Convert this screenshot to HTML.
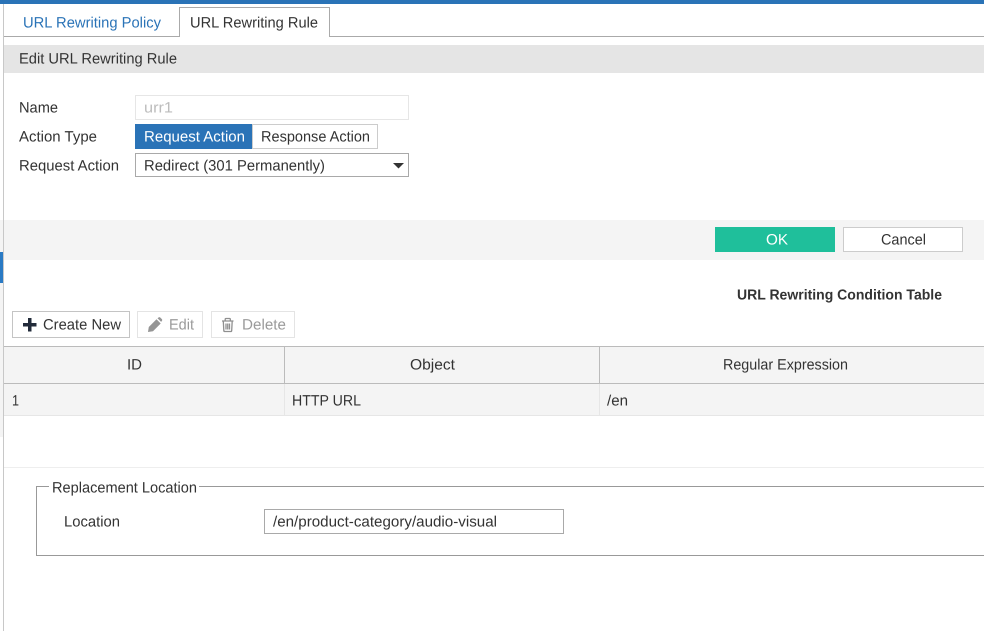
<!DOCTYPE html>
<html><head><meta charset="utf-8"><style>
html,body{margin:0;padding:0;background:#fff;width:984px;height:631px;overflow:hidden}
svg{display:block}
text{font-family:"Liberation Sans",sans-serif;font-size:15px;fill:#333;text-rendering:geometricPrecision;transform:translateY(-.5px)}
</style></head><body>
<svg xmlns="http://www.w3.org/2000/svg" width="984" height="631" viewBox="0 0 984 631" shape-rendering="crispEdges">
<rect width="984" height="631" fill="#fff"/>
<rect x="0" y="220" width="3" height="217" fill="#f4f4f4"/>
<rect x="0" y="0" width="984" height="4" fill="#2a73b7"/>
<rect x="3" y="4" width="1" height="627" fill="#c8c8c8"/>
<rect x="0" y="252" width="3" height="31" fill="#2a7ac4"/>
<!-- tabs -->
<rect x="4" y="36" width="980" height="1" fill="#aaa"/>
<rect x="179" y="7" width="151" height="30" fill="#aaa"/>
<rect x="180" y="8" width="149" height="29" fill="#fff"/>
<text x="23" y="28" textLength="138" lengthAdjust="spacingAndGlyphs" style="fill:#2a73b7">URL Rewriting Policy</text>
<text x="190" y="28" textLength="128" lengthAdjust="spacingAndGlyphs">URL Rewriting Rule</text>
<!-- section -->
<rect x="4" y="45" width="980" height="28" fill="#e5e5e5"/>
<text x="19" y="64" textLength="158" lengthAdjust="spacingAndGlyphs">Edit URL Rewriting Rule</text>
<!-- form -->
<text x="19" y="113" textLength="39" lengthAdjust="spacingAndGlyphs">Name</text>
<rect x="135.500" y="95.500" width="273" height="24" fill="#fff" stroke="#e6e6e6"/>
<text x="144" y="113" textLength="29" lengthAdjust="spacingAndGlyphs" style="fill:#bdbdbd">urr1</text>
<text x="19" y="142" textLength="78" lengthAdjust="spacingAndGlyphs">Action Type</text>
<rect x="135" y="124" width="117" height="25" fill="#2a73b7"/>
<text x="144" y="142" textLength="101" lengthAdjust="spacingAndGlyphs" style="fill:#fff">Request Action</text>
<rect x="252.500" y="124.500" width="125" height="24" fill="#fff" stroke="#ccc"/>
<text x="261" y="142" textLength="109" lengthAdjust="spacingAndGlyphs">Response Action</text>
<text x="19" y="171" textLength="100" lengthAdjust="spacingAndGlyphs">Request Action</text>
<rect x="135.500" y="153.500" width="273" height="23" fill="#fff" stroke="#a9a9a9"/>
<text x="144" y="171" textLength="181" lengthAdjust="spacingAndGlyphs">Redirect (301 Permanently)</text>
<path d="M393 163h11l-5.500 5.500z" fill="#333" shape-rendering="auto"/>
<!-- footer -->
<rect x="4" y="220" width="980" height="40" fill="#f4f4f4"/>
<rect x="715" y="227" width="120" height="25" fill="#1fbf9b"/>
<text x="766" y="245" textLength="22" lengthAdjust="spacingAndGlyphs" style="fill:#fff">OK</text>
<rect x="843.500" y="227.500" width="119" height="24" fill="#fff" stroke="#ccc"/>
<text x="881" y="245" textLength="45" lengthAdjust="spacingAndGlyphs">Cancel</text>
<text x="737" y="300" textLength="205" lengthAdjust="spacingAndGlyphs" font-weight="bold" style="font-size:14.500px">URL Rewriting Condition Table</text>
<!-- toolbar -->
<rect x="12.500" y="311.500" width="117" height="26" fill="#fff" stroke="#c4c4c4"/>
<path d="M23 323h5v-5h3.500v5h5v3.500h-5v5h-3.500v-5h-5z" fill="#222b3a" shape-rendering="auto"/>
<text x="43" y="330" textLength="78" lengthAdjust="spacingAndGlyphs">Create New</text>
<rect x="137.500" y="311.500" width="65" height="26" fill="#fff" stroke="#e4e4e4"/>
<path d="M148 332l.8-5 7.700-7.700 4.200 4.200-7.700 7.700zM157.500 318.300l1.200-.9q.7-.5 1.400 0l1.900 1.900q.5.700 0 1.400l-.9 1.200z" fill="#959595" shape-rendering="auto"/>
<text x="169" y="330" textLength="25" lengthAdjust="spacingAndGlyphs" style="fill:#9a9a9a">Edit</text>
<rect x="211.500" y="311.500" width="83" height="26" fill="#fff" stroke="#e4e4e4"/>
<g shape-rendering="auto" fill="none" stroke="#8f8f8f" stroke-width="1.300">
<path d="M222 321h11.500M223.300 321l.5 9.500q.1 1 1 1h5.900q.9 0 1-1l.5-9.500M225.200 320.500v-1.300q0-.7.700-.7h3.700q.7 0 .7.700v1.300M226 323.500v6M227.750 323.500v6M229.500 323.500v6"/>
</g>
<text x="242" y="330" textLength="44" lengthAdjust="spacingAndGlyphs" style="fill:#9a9a9a">Delete</text>
<!-- table -->
<rect x="4" y="346" width="980" height="70" fill="#f4f4f4"/>
<rect x="4" y="346" width="980" height="1" fill="#bbb"/>
<rect x="4" y="383" width="980" height="1" fill="#bbb"/>
<rect x="4" y="415" width="980" height="1" fill="#e6e6e6"/>
<rect x="284" y="347" width="1" height="36" fill="#bbb"/>
<rect x="599" y="347" width="1" height="36" fill="#bbb"/>
<rect x="284" y="384" width="1" height="31" fill="#e6e6e6"/>
<rect x="599" y="384" width="1" height="31" fill="#e6e6e6"/>
<text x="127" y="370" textLength="15" lengthAdjust="spacingAndGlyphs">ID</text>
<text x="410" y="370" textLength="45" lengthAdjust="spacingAndGlyphs">Object</text>
<text x="723" y="370" textLength="125" lengthAdjust="spacingAndGlyphs">Regular Expression</text>
<text x="12" y="406" textLength="7" lengthAdjust="spacingAndGlyphs">1</text>
<text x="292" y="406" textLength="69" lengthAdjust="spacingAndGlyphs">HTTP URL</text>
<text x="607" y="406" textLength="21" lengthAdjust="spacingAndGlyphs">/en</text>
<rect x="4" y="467" width="980" height="1" fill="#eee"/>
<!-- fieldset -->
<path d="M49 486.500H36.500V555.500H984M199 486.500H984" fill="none" stroke="#999"/>
<text x="52" y="493" textLength="145" lengthAdjust="spacingAndGlyphs">Replacement Location</text>
<text x="64" y="527" textLength="56" lengthAdjust="spacingAndGlyphs">Location</text>
<rect x="264.500" y="509.500" width="299" height="24" fill="#fff" stroke="#a9a9a9"/>
<text x="273" y="527" textLength="224" lengthAdjust="spacingAndGlyphs">/en/product-category/audio-visual</text>
</svg>
</body></html>
